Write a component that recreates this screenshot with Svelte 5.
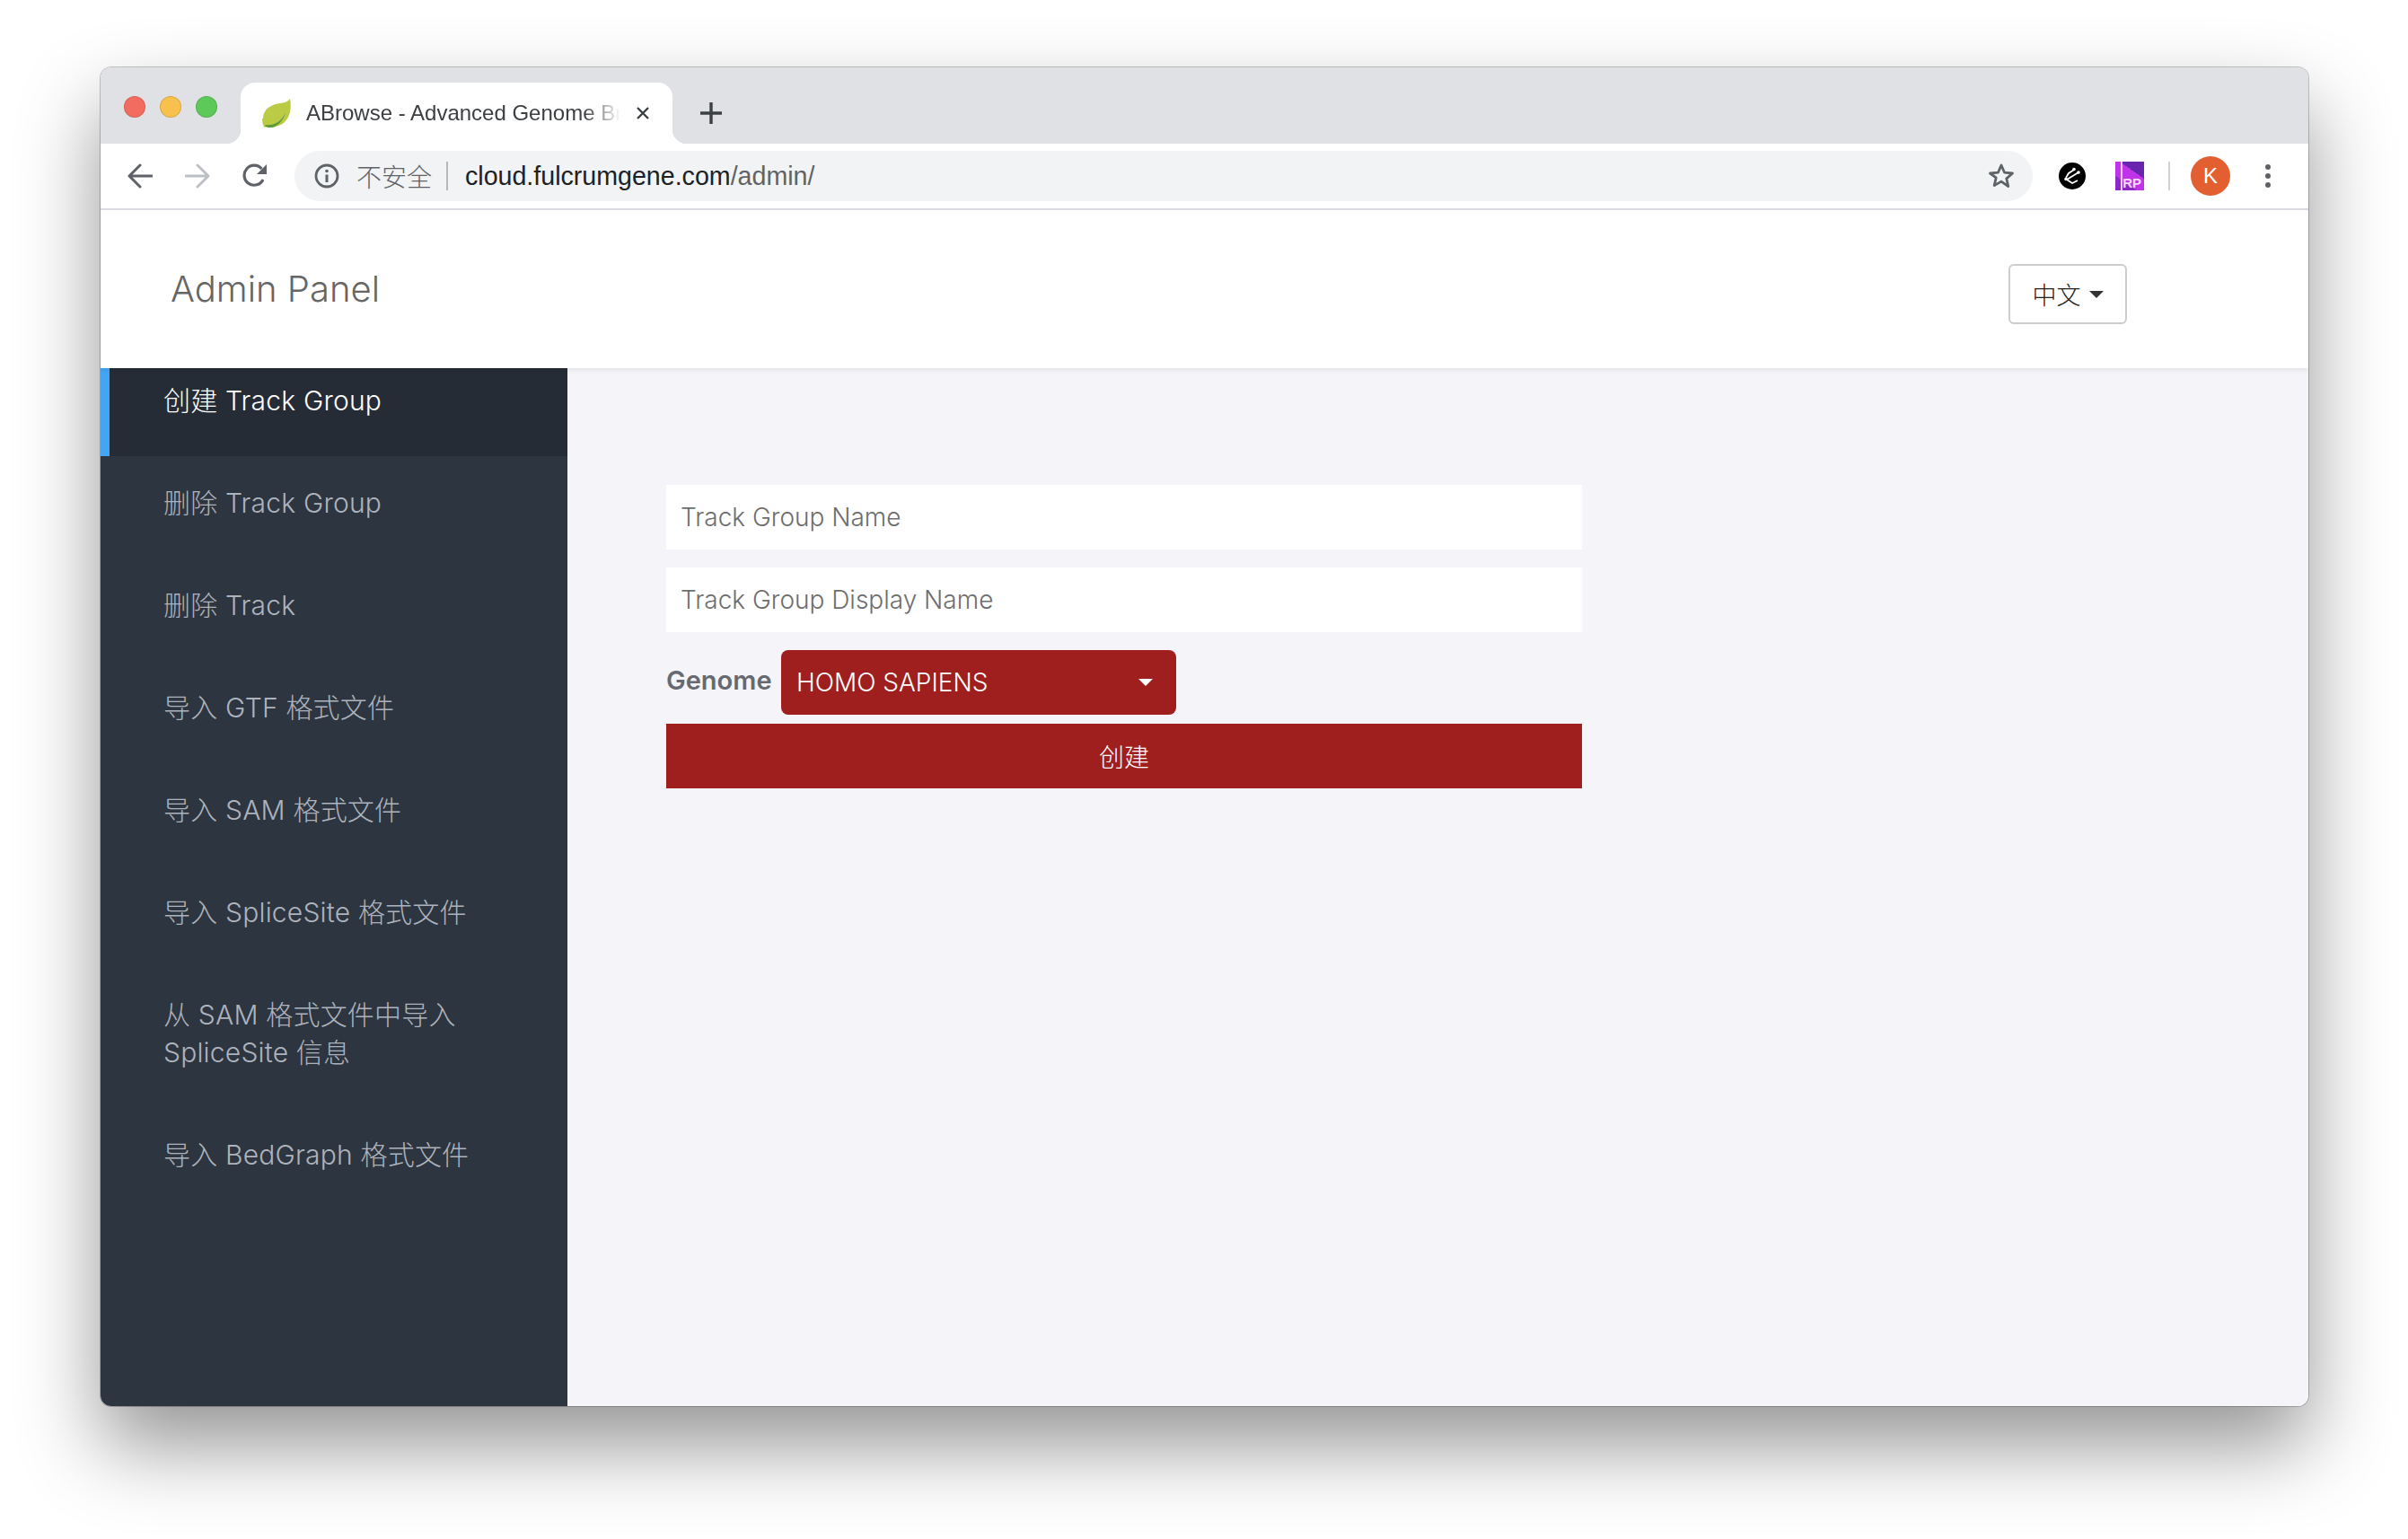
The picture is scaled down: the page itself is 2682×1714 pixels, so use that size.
<script lang="ts">
  const menu = [
    { label: '创建 Track Group', active: true },
    { label: '删除 Track Group' },
    { label: '删除 Track' },
    { label: '导入 GTF 格式文件' },
    { label: '导入 SAM 格式文件' },
    { label: '导入 SpliceSite 格式文件' },
    { label: '从 SAM 格式文件中导入 SpliceSite 信息' },
    { label: '导入 BedGraph 格式文件' }
  ];
</script>

<div class="desktop">
  <div class="window">
    <div class="tabstrip">
      <div class="lights">
        <span class="light red"></span>
        <span class="light yellow"></span>
        <span class="light green"></span>
      </div>
      <div class="tab">
        <svg class="leaf" viewBox="0 0 32 32" width="32" height="32">
          <path d="M1 22C1 11 11 6 20 5c5-.6 9-2 11-5 2 10 0 20-6 26-5 5-14 6-20 4l-3 2c-1-3-2-6-2-10z" fill="#bccb45" />
          <path d="M4 29c8 1 16-2 22-13-3 9-9 15-15 16-3 .4-5 0-8-1z" fill="#5f9a36" />
        </svg>
        <span class="tab-title">ABrowse - Advanced Genome Br</span>
        <svg class="tab-close" viewBox="0 0 16 16" width="16" height="16">
          <path d="M2 2l12 12M14 2L2 14" stroke="#3c4043" stroke-width="2.4" fill="none" />
        </svg>
      </div>
      <svg class="newtab" viewBox="0 0 24 24" width="24" height="24">
        <path d="M12 0v24M0 12h24" stroke="#3c4043" stroke-width="3.4" fill="none" />
      </svg>
    </div>

    <div class="toolbar">
      <svg class="nav" viewBox="0 0 28 28" width="28" height="28">
        <path d="M27 14H3M14 2L2 14l12 12" stroke="#5f6368" stroke-width="3" fill="none" stroke-linecap="round" stroke-linejoin="round" />
      </svg>
      <svg class="nav" viewBox="0 0 28 28" width="28" height="28">
        <path d="M1 14h24M14 2l12 12-12 12" stroke="#bdc1c6" stroke-width="3" fill="none" stroke-linecap="round" stroke-linejoin="round" />
      </svg>
      <svg class="nav" viewBox="0 0 28 28" width="28" height="28">
        <path d="M23 18a11 11 0 1 1-1.6-12" stroke="#5f6368" stroke-width="3.2" fill="none" />
        <path d="M27 1v11H16z" fill="#5f6368" />
      </svg>
      <div class="omnibox">
        <svg class="info" viewBox="0 0 28 28" width="28" height="28">
          <circle cx="14" cy="14" r="12" stroke="#5f6368" stroke-width="2.8" fill="none" />
          <path d="M14 12.5V21" stroke="#5f6368" stroke-width="3" />
          <circle cx="14" cy="8.5" r="1.8" fill="#5f6368" />
        </svg>
        <span class="insecure">不安全</span>
        <span class="omni-sep"></span>
        <span class="url">cloud.fulcrumgene.com<span class="url-path">/admin/</span></span>
        <svg class="star" viewBox="0 0 30 30" width="30" height="30">
          <path d="M15 3l3.6 8.2 8.9.8-6.7 5.9 2 8.7L15 21.1l-7.8 4.5 2-8.7L2.500 12l8.900-.8z" stroke="#5f6368" stroke-width="2.800" fill="none" stroke-linejoin="round" />
        </svg>
      </div>
      <div class="extensions">
        <svg viewBox="0 0 30 30" width="30" height="30">
          <circle cx="15" cy="15" r="15" fill="#000" />
          <path d="M17 8l-6 4-3 5M22 11L9 19l6 4 6-3" stroke="#fff" stroke-width="1.800" fill="none" />
          <circle cx="17" cy="7.500" r="1.800" fill="#fff" />
          <circle cx="22" cy="11" r="1.800" fill="#fff" />
          <circle cx="8" cy="18.500" r="1.800" fill="#fff" />
        </svg>
        <div class="rp">
          <span class="rp-text">RP</span>
        </div>
        <span class="ext-sep"></span>
        <div class="avatar">K</div>
        <div class="dots"><span></span><span></span><span></span></div>
      </div>
    </div>

    <div class="page">
      <header class="page-header">
        <h1>Admin Panel</h1>
        <button class="lang" type="button">中文<span class="lang-caret"></span></button>
      </header>

      <div class="page-body">
        <nav class="sidebar">
          {#each menu as item}
            <a class="menu-item" class:active={item.active} href="#top">{item.label}</a>
          {/each}
        </nav>

        <main class="content">
          <form class="track-form">
            <input type="text" placeholder="Track Group Name" />
            <input type="text" placeholder="Track Group Display Name" />
            <div class="genome-row">
              <span class="genome-label">Genome</span>
              <div class="genome-select">
                <span>HOMO SAPIENS</span>
                <span class="select-caret"></span>
              </div>
            </div>
            <button class="submit" type="button">创建</button>
          </form>
        </main>
      </div>
    </div>
  </div>
</div>

<style>
  :global(body) {
    margin: 0;
    background: #fff;
  }

  .desktop {
    box-sizing: border-box;
    width: 2682px;
    height: 1714px;
    padding: 75px 111px 148px 112px;
    overflow: hidden;
    font-family: "Liberation Sans", "Noto Sans CJK SC", sans-serif;
  }

  .window {
    display: flex;
    flex-direction: column;
    height: 100%;
    border-radius: 12px;
    overflow: hidden;
    box-shadow: 0 0 0 1px rgba(0, 0, 0, 0.22), 0 44px 90px rgba(0, 0, 0, 0.42);
    background: #fff;
  }

  .tabstrip {
    display: flex;
    align-items: flex-end;
    height: 85px;
    flex: none;
    background: #dfe1e5;
  }

  .lights {
    display: flex;
    gap: 16px;
    align-self: flex-start;
    margin: 32px 0 0 26px;
    width: 130px;
  }

  .light {
    box-sizing: border-box;
    width: 24px;
    height: 24px;
    border-radius: 50%;
    border: 1px solid rgba(0, 0, 0, 0.12);
  }

  .red { background: #f26d60; }
  .yellow { background: #f8c04d; }
  .green { background: #5dc958; }

  .tab {
    position: relative;
    display: flex;
    align-items: center;
    box-sizing: border-box;
    width: 481px;
    height: 68px;
    padding: 0 26px 0 24px;
    background: #fff;
    border-radius: 16px 16px 0 0;
  }

  .tab::before,
  .tab::after {
    content: "";
    position: absolute;
    bottom: 0;
    width: 16px;
    height: 16px;
  }

  .tab::before {
    left: -16px;
    background: radial-gradient(circle at 0 0, #dfe1e5 16px, #fff 16.5px);
  }

  .tab::after {
    right: -16px;
    background: radial-gradient(circle at 100% 0, #dfe1e5 16px, #fff 16.5px);
  }

  .leaf {
    flex: none;
    margin-right: 17px;
  }

  .tab-title {
    width: 350px;
    flex: none;
    white-space: nowrap;
    font-size: 24px;
    color: #3c4043;
    -webkit-mask-image: linear-gradient(to right, #000 310px, transparent 350px);
    mask-image: linear-gradient(to right, #000 310px, transparent 350px);
  }

  .tab-close {
    flex: none;
    margin-left: 17px;
  }

  .newtab {
    margin: 0 0 22px 31px;
  }

  .toolbar {
    display: flex;
    align-items: center;
    box-sizing: border-box;
    height: 74px;
    flex: none;
    padding-left: 30px;
    background: #fff;
    border-bottom: 2px solid #dcdce2;
  }

  .nav {
    flex: none;
    margin-right: 36px;
  }

  .omnibox {
    display: flex;
    align-items: center;
    box-sizing: border-box;
    width: 1936px;
    height: 56px;
    margin-left: -6px;
    padding: 0 20px 0 22px;
    border-radius: 28px;
    background: #f1f3f4;
  }

  .info {
    flex: none;
  }

  .insecure {
    margin-left: 19px;
    font-size: 28px;
    font-weight: 300;
    color: #5f6368;
  }

  .omni-sep {
    width: 2px;
    height: 32px;
    margin: 0 19px 0 16px;
    background: #b6b8bb;
  }

  .url {
    flex: 1;
    font-size: 28.6px;
    color: #202124;
  }

  .url-path {
    color: #5f6368;
  }

  .extensions {
    display: flex;
    align-items: center;
    margin-left: 29px;
  }

  .rp {
    position: relative;
    width: 32px;
    height: 32px;
    margin-left: 33px;
    background:
      linear-gradient(90deg, transparent 6px, #e7c8f2 6px, #e7c8f2 8px, transparent 8px),
      linear-gradient(215deg, #6a25ae 0 35%, #c033e8 35% 70%, #8d27c5 70%);
  }

  .rp-text {
    position: absolute;
    right: 3px;
    bottom: 1px;
    font-size: 15px;
    font-weight: 700;
    line-height: 1;
    color: #f3d9fb;
  }

  .ext-sep {
    width: 2px;
    height: 32px;
    margin: 0 23px 0 27px;
    background: #d0d0d0;
  }

  .avatar {
    width: 44px;
    height: 44px;
    border-radius: 50%;
    background: #e35f32;
    color: #fff;
    font-size: 24px;
    line-height: 44px;
    text-align: center;
  }

  .dots {
    display: flex;
    flex-direction: column;
    gap: 4px;
    margin-left: 39px;
  }

  .dots span {
    width: 6px;
    height: 6px;
    border-radius: 50%;
    background: #5f6368;
  }

  .page {
    display: flex;
    flex-direction: column;
    flex: 1;
    min-height: 0;
    font-family: Inter, "Noto Sans CJK SC", sans-serif;
    font-weight: 300;
  }

  .page-header {
    position: relative;
    display: flex;
    justify-content: space-between;
    align-items: flex-start;
    box-sizing: border-box;
    height: 176px;
    flex: none;
    padding: 60px 202px 0 78px;
    background: #fff;
    box-shadow: 0 2px 6px rgba(0, 0, 0, 0.08);
  }

  h1 {
    margin: 4px 0 0;
    font-size: 40px;
    font-weight: 300;
    line-height: 48px;
    color: #666;
  }

  .lang {
    display: flex;
    align-items: center;
    justify-content: center;
    box-sizing: border-box;
    width: 132px;
    height: 67px;
    padding: 0;
    border: 2px solid #ccc;
    border-radius: 6px;
    background: #fff;
    font-family: inherit;
    font-weight: 300;
    font-size: 27px;
    color: #222;
  }

  .lang-caret {
    width: 0;
    height: 0;
    margin-left: 9px;
    border: 8px solid transparent;
    border-top-color: #333;
    border-bottom: 0;
  }

  .page-body {
    display: flex;
    flex: 1;
    min-height: 0;
  }

  .sidebar {
    display: flex;
    flex-direction: column;
    width: 520px;
    flex: none;
    background: #2d3540;
  }

  .menu-item {
    box-sizing: border-box;
    padding: 15px 80px 41px 70px;
    margin-bottom: 16px;
    font-size: 30px;
    line-height: 42px;
    letter-spacing: 0.2px;
    color: #adb3bd;
    text-decoration: none;
  }

  .menu-item.active {
    padding-left: 60px;
    border-left: 10px solid #42a5f5;
    background: #252c35;
    color: #fff;
  }

  .content {
    flex: 1;
    padding: 130px 0 0 110px;
    background: #f4f4f9;
  }

  .track-form {
    display: flex;
    flex-direction: column;
    width: 1020px;
  }

  input {
    box-sizing: border-box;
    height: 72px;
    margin-bottom: 20px;
    padding: 0 16px;
    border: 0;
    background: #fff;
    font-family: inherit;
    font-weight: 300;
    font-size: 28px;
  }

  input::placeholder {
    color: #6e6e6e;
    opacity: 1;
  }

  .genome-row {
    display: flex;
    align-items: center;
    gap: 10px;
    margin-bottom: 10px;
  }

  .genome-label {
    position: relative;
    top: -3px;
    width: 118px;
    flex: none;
    white-space: nowrap;
    font-size: 29px;
    font-weight: 600;
    color: #666a70;
  }

  .genome-select {
    display: flex;
    align-items: center;
    justify-content: space-between;
    box-sizing: border-box;
    width: 440px;
    height: 72px;
    padding: 0 26px 0 17px;
    border-radius: 8px;
    background: #9e1f1e;
    font-size: 28px;
    color: #fff;
  }

  .select-caret {
    width: 0;
    height: 0;
    border: 8px solid transparent;
    border-top-color: #fff;
    border-bottom: 0;
  }

  .submit {
    height: 72px;
    padding: 0;
    border: 0;
    background: #9e1f1e;
    font-family: inherit;
    font-weight: 300;
    font-size: 28px;
    color: #fff;
  }
</style>
